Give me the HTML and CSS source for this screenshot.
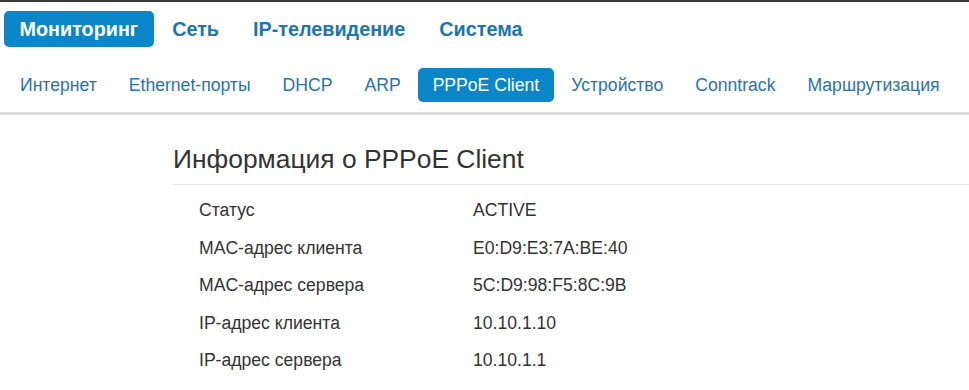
FILE: index.html
```html
<!DOCTYPE html>
<html lang="ru">
<head>
<meta charset="utf-8">
<title>PPPoE Client</title>
<link rel="stylesheet" href="styles.css">
</head>
<body>
<div class="topline"></div>
<nav class="mainnav">
  <a class="mainitem active">Мониторинг</a>
  <a class="mainitem">Сеть</a>
  <a class="mainitem">IP-телевидение</a>
  <a class="mainitem">Система</a>
</nav>
<nav class="subnav">
  <a class="subitem">Интернет</a>
  <a class="subitem">Ethernet-порты</a>
  <a class="subitem">DHCP</a>
  <a class="subitem">ARP</a>
  <a class="subitem active">PPPoE Client</a>
  <a class="subitem">Устройство</a>
  <a class="subitem">Conntrack</a>
  <a class="subitem">Маршрутизация</a>
</nav>
<div class="divider"></div>
<main class="content">
  <h1 class="title">Информация о PPPoE Client</h1>
  <div class="rows">
    <div class="row"><span class="label">Статус</span><span class="value">ACTIVE</span></div>
    <div class="row"><span class="label">MAC-адрес клиента</span><span class="value">E0:D9:E3:7A:BE:40</span></div>
    <div class="row"><span class="label">MAC-адрес сервера</span><span class="value">5C:D9:98:F5:8C:9B</span></div>
    <div class="row"><span class="label">IP-адрес клиента</span><span class="value">10.10.1.10</span></div>
    <div class="row"><span class="label">IP-адрес сервера</span><span class="value">10.10.1.1</span></div>
  </div>
</main>
</body>
</html>
```

FILE: styles.css
```css
* { box-sizing: border-box; }
body {
  margin: 0;
  background: #fff;
  font-family: "Liberation Sans", Arial, sans-serif;
  color: #333;
}
.topline { height: 2px; background: #3a3a3a; }
.mainnav {
  display: flex;
  gap: 3px;
  padding: 9px 0 0 4px;
}
.mainitem {
  display: block;
  height: 36px;
  line-height: 36px;
  padding: 0 15.5px;
  border-radius: 5px;
  font-size: 19.8px;
  font-weight: bold;
  color: #1a75b3;
}
.mainitem.active { background: #0b87c9; color: #fff; }
.subnav {
  display: flex;
  gap: 2px;
  padding: 21px 0 0 5px;
}
.subitem {
  display: block;
  height: 34px;
  line-height: 34px;
  padding: 0 15px;
  border-radius: 5px;
  font-size: 17.6px;
  color: #2a72ad;
}
.subitem.active { background: #0b87c9; color: #fff; }
.divider { height: 3px; background: #dddddd; margin-top: 10px; }
.content { padding-left: 173px; }
.title {
  margin: 0;
  padding: 30px 0 11px;
  font-size: 26.4px;
  font-weight: normal;
  color: #333;
  line-height: 28px;
  border-bottom: 1px solid #e5e5e5;
}
.rows { padding: 7px 0 0 26px; }
.row {
  display: flex;
  height: 37.5px;
  align-items: center;
  font-size: 17.6px;
}
.label { width: 274px; }
```
